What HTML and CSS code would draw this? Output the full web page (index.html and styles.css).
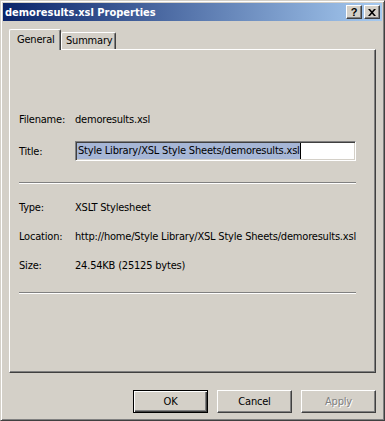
FILE: index.html
```html
<!DOCTYPE html>
<html>
<head>
<meta charset="utf-8">
<link rel="stylesheet" href="styles.css">
</head>
<body>
<div class="window">
  <div class="titlebar">
    <span class="title">demoresults.xsl Properties</span>
    <div class="caption-btns">
      <div class="cbtn help">?</div>
      <div class="cbtn close">
        <svg width="8" height="7" viewBox="0 0 8 7"><path d="M0 0h2l2 2.2L6 0h2L5 3.5 8 7H6L4 4.8 2 7H0l3-3.5z" fill="#000"/></svg>
      </div>
    </div>
  </div>
  <div class="client">
    <div class="tabs">
      <div class="tab active">General</div>
      <div class="tab">Summary</div>
    </div>
    <div class="panel">
      <div class="row r-filename"><span class="label">Filename:</span><span class="value">demoresults.xsl</span></div>
      <div class="row r-title"><span class="label">Title:</span>
        <div class="field"><span class="sel">Style Library/XSL Style Sheets/demoresults.xsl</span></div>
      </div>
      <div class="sep sep1"></div>
      <div class="row r-type"><span class="label">Type:</span><span class="value">XSLT Stylesheet</span></div>
      <div class="row r-loc"><span class="label">Location:</span><span class="value clip">http://home/Style Library/XSL Style Sheets/demoresults.xsl</span></div>
      <div class="row r-size"><span class="label">Size:</span><span class="value">24.54KB (25125 bytes)</span></div>
      <div class="sep sep2"></div>
    </div>
    <div class="buttons">
      <div class="btn default"><span>OK</span></div>
      <div class="btn"><span>Cancel</span></div>
      <div class="btn disabled"><span>Apply</span></div>
    </div>
  </div>
</div>
</body>
</html>
```
FILE: styles.css
```css
html, body {
  margin: 0;
  padding: 0;
  background: #d4d0c8;
}
body {
  font-family: "DejaVu Sans Condensed", "DejaVu Sans", "Liberation Sans", sans-serif;
  font-stretch: condensed;
  font-size: 11px;
  letter-spacing: -0.2px;
  color: #000;
}
.window {
  width: 385px;
  height: 421px;
  box-sizing: border-box;
  border: 1px solid;
  border-color: #d4d0c8 #404040 #404040 #d4d0c8;
  box-shadow: inset 1px 1px #fff, inset -1px -1px #808080;
  padding: 2px;
  background: #d4d0c8;
  display: flex;
  flex-direction: column;
}
.titlebar {
  height: 18px;
  background: linear-gradient(to right, #0a246a, #a6caf0);
  display: flex;
  align-items: center;
  justify-content: space-between;
  padding: 0 2px 0 2px;
}
.title {
  color: #fff;
  font-weight: bold;
  font-size: 11px;
  letter-spacing: 0;
}
.caption-btns {
  display: flex;
  gap: 2px;
}
.cbtn {
  width: 16px;
  height: 14px;
  box-sizing: border-box;
  background: #d4d0c8;
  border: 1px solid;
  border-color: #fff #404040 #404040 #fff;
  box-shadow: inset -1px -1px #808080;
  display: flex;
  align-items: center;
  justify-content: center;
  font-weight: bold;
  font-size: 11px;
  line-height: 12px;
  letter-spacing: 0;
  font-family: "Liberation Sans", sans-serif;
}
.cbtn svg { display: block; }
.client {
  flex: 1;
  display: flex;
  flex-direction: column;
  padding: 8px 6px 0 6px;
}
.tabs {
  display: flex;
  height: 20px;
  align-items: flex-end;
}
.tab {
  box-sizing: border-box;
  height: 17px;
  border-top: 1px solid #fff;
  border-left: 1px solid #fff;
  border-right: 1px solid #404040;
  box-shadow: inset -1px 0 #808080;
  border-radius: 2px 2px 0 0;
  padding: 1px 5px 0 4px;
  line-height: 14px;
  width: 55px;
}
.tab.active {
  height: 21px;
  width: 52px;
  margin-bottom: -1px;
  position: relative;
  z-index: 1;
  background: #d4d0c8;
  padding: 2px 0 0 7px;
  line-height: 15px;
}
.panel {
  box-sizing: border-box;
  width: 367px;
  height: 324px;
  border-top: 1px solid #fff;
  border-left: 1px solid #fff;
  border-right: 1px solid #404040;
  border-bottom: 1px solid #404040;
  box-shadow: inset -1px -1px #808080;
  padding: 59px 18px 0 9px;
  display: flex;
  flex-direction: column;
}
.row {
  display: flex;
  align-items: center;
  height: 20px;
}
.label {
  width: 56px;
  flex: none;
}
.value {
  white-space: nowrap;
}
.clip {
  width: 281px;
  overflow: hidden;
}
.r-title { margin-top: 12px; }
.sep {
  height: 1px;
  border-bottom: 1px solid #fff;
  background: #808080;
  width: 337px;
}
.sep1 { margin-top: 21px; }
.r-type { margin-top: 13px; }
.r-loc { margin-top: 9px; }
.r-size { margin-top: 9px; }
.sep2 { margin-top: 17px; }
.field {
  width: 281px;
  height: 20px;
  box-sizing: border-box;
  border: 1px solid;
  border-color: #808080 #fff #fff #808080;
  box-shadow: inset 1px 1px #404040, inset -1px -1px #d4d0c8;
  background: #fff;
  padding: 1px;
  display: flex;
}
.sel {
  background: #a6b6d6;
  line-height: 16px;
  padding: 0 0 0 1px;
  border-right: 1px solid #000;
  white-space: nowrap;
}
.buttons {
  display: flex;
  justify-content: flex-end;
  gap: 9px;
  margin-top: 17px;
}
.btn {
  width: 75px;
  height: 23px;
  box-sizing: border-box;
  border: 1px solid;
  border-color: #fff #404040 #404040 #fff;
  box-shadow: inset -1px -1px #808080;
  display: flex;
  align-items: center;
  justify-content: center;
}
.btn.default {
  border: 1px solid #000;
  box-shadow: inset 1px 1px #fff, inset -1px -1px #404040, inset -2px -2px #808080;
}
.btn.disabled span {
  color: #808080;
  text-shadow: 1px 1px #fff;
}
```
